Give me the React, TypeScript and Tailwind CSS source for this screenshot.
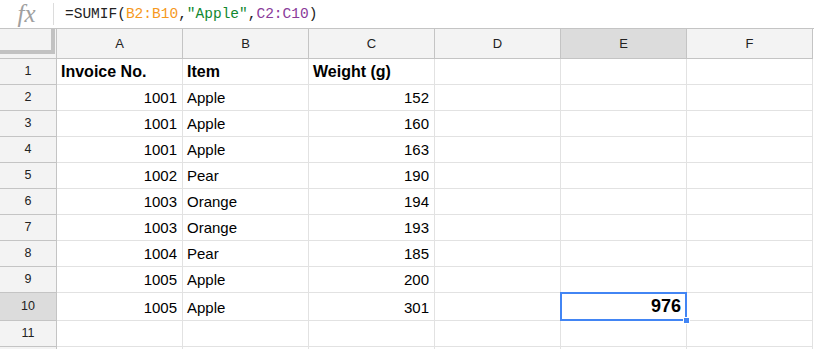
import React from 'react';

const cols = ['A', 'B', 'C', 'D', 'E', 'F'];

type Row = { id: number; a?: string; b?: string; c?: string; head?: boolean };

const rows: Row[] = [
  { id: 1, a: 'Invoice No.', b: 'Item', c: 'Weight (g)', head: true },
  { id: 2, a: '1001', b: 'Apple', c: '152' },
  { id: 3, a: '1001', b: 'Apple', c: '160' },
  { id: 4, a: '1001', b: 'Apple', c: '163' },
  { id: 5, a: '1002', b: 'Pear', c: '190' },
  { id: 6, a: '1003', b: 'Orange', c: '194' },
  { id: 7, a: '1003', b: 'Orange', c: '193' },
  { id: 8, a: '1004', b: 'Pear', c: '185' },
  { id: 9, a: '1005', b: 'Apple', c: '200' },
  { id: 10, a: '1005', b: 'Apple', c: '301' },
  { id: 11 },
];

function Cell({ text, right, bold }: { text?: string; right?: boolean; bold?: boolean }) {
  return (
    <div
      className={`flex items-end w-[126px] border-r border-b border-[#e2e2e2] pl-[4px] pr-[5px] pb-[4px] ${
        right ? 'justify-end' : 'justify-start'
      }`}
    >
      {text && (
        <span className={bold ? 'text-[16px] font-bold leading-[17px]' : 'text-[15px] leading-[17px]'}>{text}</span>
      )}
    </div>
  );
}

function SelectedCell() {
  return (
    <div className="relative flex items-end justify-end w-[126px] border-r border-b border-[#e2e2e2] pr-[5px] pb-[4px]">
      <span className="text-[18px] font-bold leading-[20px]">976</span>
      <div className="absolute -left-[1px] -top-[1px] w-[127px] h-[29px] border-2 border-[#4285f4]" />
      <div className="absolute -right-[4px] -bottom-[4px] w-[7px] h-[7px] bg-[#4285f4] border border-white" />
    </div>
  );
}

export default function App() {
  return (
    <div className="w-[814px] h-[349px] overflow-hidden bg-white text-black font-['Liberation_Sans',Arial,sans-serif]">
      {/* formula bar */}
      <div className="flex items-center h-[29px] border-b border-[#c4c4c4]">
        <div className="flex items-center justify-center w-[53px] h-[28px]">
          <span className="font-['Liberation_Serif',serif] italic text-[25px] text-[#a0a0a0] leading-[26px]">fx</span>
        </div>
        <div className="w-px h-[22px] bg-[#dcdcdc]" />
        <div className="pl-[11px] font-['Liberation_Mono',monospace] text-[14.5px] text-[#222] leading-none">
          =SUMIF(<span className="text-[#f6991d]">B2:B10</span>,<span className="text-[#11882f]">"Apple"</span>,
          <span className="text-[#8a3b9a]">C2:C10</span>)
        </div>
      </div>

      {/* column headers */}
      <div className="flex h-[30px]">
        <div className="w-[57px] bg-[#f3f3f3] border-r border-b border-[#c4c4c4]">
          <div className="w-[55px] h-[25px] border-r-4 border-b-4 border-[#c2c2c2]" />
        </div>
        {cols.map((c) => (
          <div
            key={c}
            className={`flex items-center justify-center w-[126px] border-r border-b border-[#c4c4c4] text-[13px] text-[#222] ${
              c === 'E' ? 'bg-[#dcdcdc]' : 'bg-[#f3f3f3]'
            }`}
          >
            {c}
          </div>
        ))}
      </div>

      {/* rows */}
      {rows.map((r) => (
        <div key={r.id} className={`flex ${r.id === 10 ? 'h-[28px]' : 'h-[26px]'}`}>
          <div
            className={`flex items-center justify-center w-[57px] border-r border-b border-[#c4c4c4] text-[12.5px] text-[#222] ${
              r.id === 10 ? 'bg-[#dcdcdc]' : 'bg-[#f3f3f3]'
            }`}
          >
            {r.id}
          </div>
          <Cell text={r.a} right={!r.head} bold={r.head} />
          <Cell text={r.b} bold={r.head} />
          <Cell text={r.c} right={!r.head} bold={r.head} />
          <Cell />
          {r.id === 10 ? <SelectedCell /> : <Cell />}
          <Cell />
        </div>
      ))}

      {/* partial next row */}
      <div className="flex h-[26px]">
        <div className="w-[57px] bg-[#f3f3f3] border-r border-[#c4c4c4]" />
        {cols.map((c) => (
          <div key={c} className="w-[126px] border-r border-[#e2e2e2]" />
        ))}
      </div>
    </div>
  );
}
